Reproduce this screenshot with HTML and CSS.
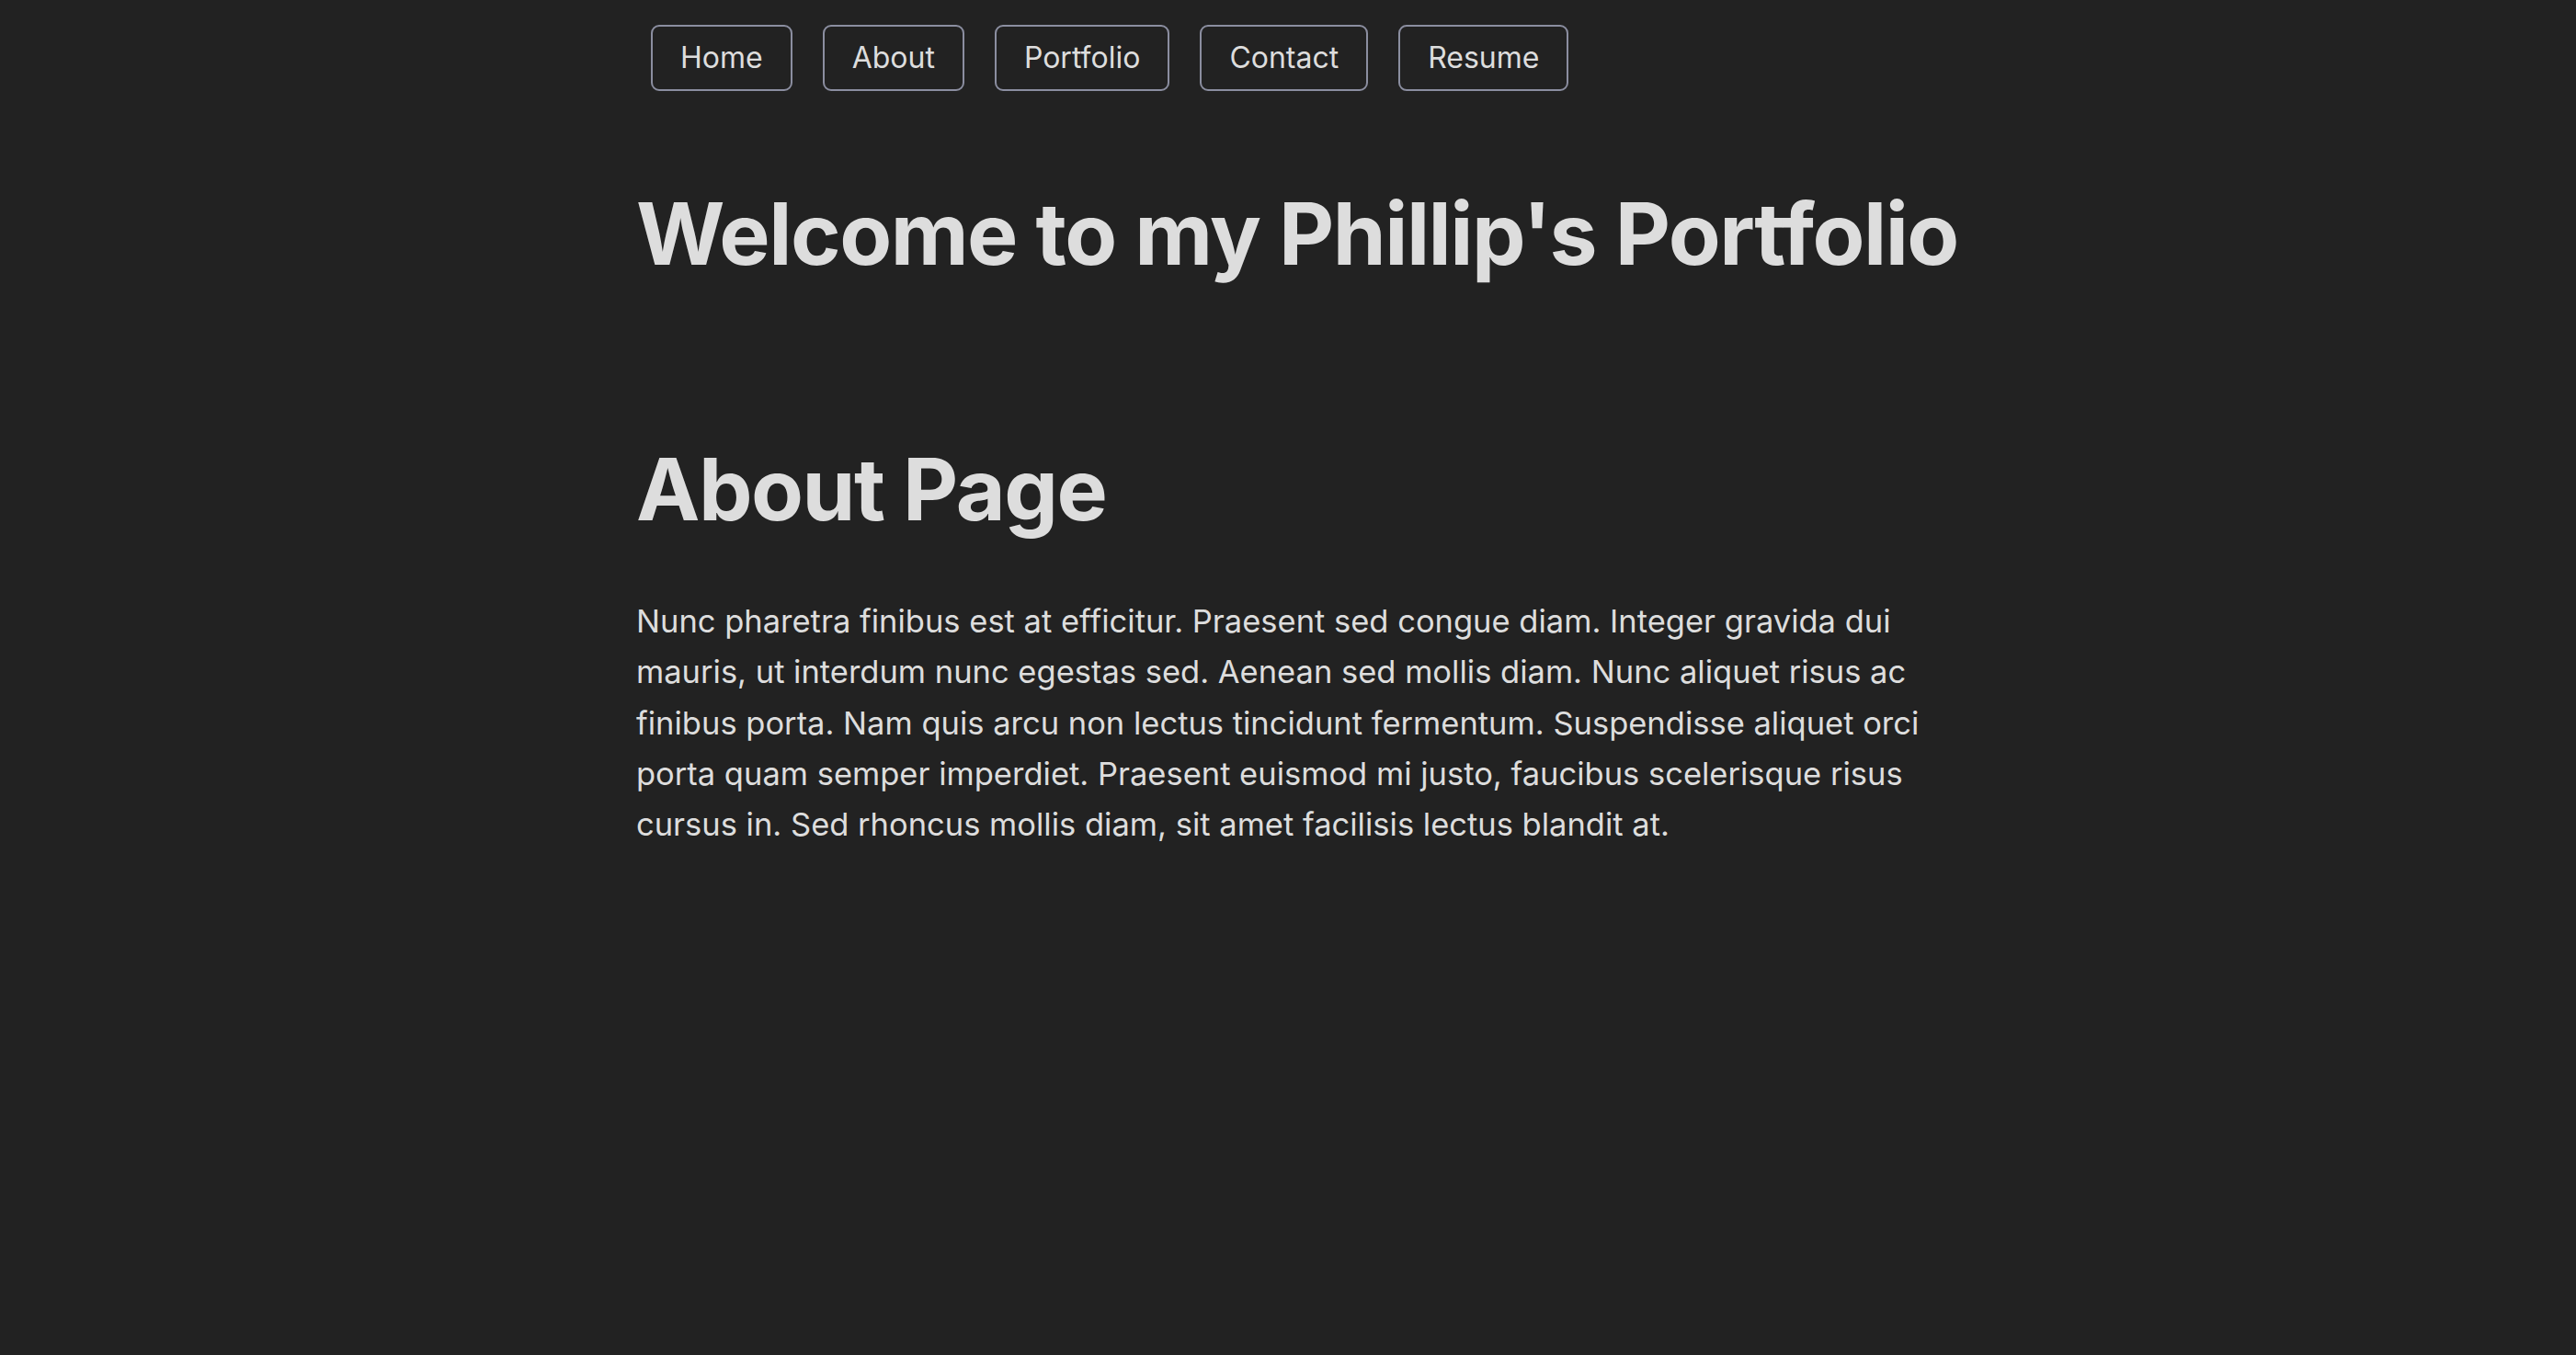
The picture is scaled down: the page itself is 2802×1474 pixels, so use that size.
FILE: index.html
```html
<!DOCTYPE html>
<html lang="en">
<head>
<meta charset="utf-8">
<title>Phillip's Portfolio</title>
<link rel="stylesheet" href="styles.css">
</head>
<body>
<div class="page">
  <nav class="nav">
    <a class="nav-btn" href="#">Home</a>
    <a class="nav-btn" href="#">About</a>
    <a class="nav-btn" href="#">Portfolio</a>
    <a class="nav-btn" href="#">Contact</a>
    <a class="nav-btn" href="#">Resume</a>
  </nav>
  <h1 class="title">Welcome to my Phillip's Portfolio</h1>
  <h1 class="page-title">About Page</h1>
  <p class="body-text">Nunc pharetra finibus est at efficitur. Praesent sed congue diam. Integer gravida dui mauris, ut interdum nunc egestas sed. Aenean sed mollis diam. Nunc aliquet risus ac finibus porta. Nam quis arcu non lectus tincidunt fermentum. Suspendisse aliquet orci porta quam semper imperdiet. Praesent euismod mi justo, faucibus scelerisque risus cursus in. Sed rhoncus mollis diam, sit amet facilisis lectus blandit at.</p>
</div>
</body>
</html>
```
FILE: styles.css
```css
html, body {
  margin: 0;
  padding: 0;
  background: #222222;
}
body {
  color: #dddddd;
  font-family: Inter, "Noto Sans", "Liberation Sans", sans-serif;
}
.page {
  max-width: 1418px;
  margin: 0 auto;
}
.nav {
  display: flex;
  gap: 33px;
  padding: 27px 0 0 16px;
}
.nav-btn {
  display: block;
  box-sizing: border-box;
  height: 72px;
  padding: 0 30px;
  border: 2px solid #8b8ea0;
  border-radius: 9px;
  color: #dddddd;
  text-decoration: none;
  font-size: 32px;
  line-height: 68px;
}
.title, .page-title {
  margin: 0;
  font-size: 93px;
  font-weight: 700;
  line-height: 116px;
  letter-spacing: -1.5px;
  white-space: nowrap;
}
.title {
  margin-top: 97px;
}
.page-title {
  margin-top: 162px;
}
.body-text {
  margin: 58px 0 0;
  font-size: 34.5px;
  line-height: 55.3px;
}
```
